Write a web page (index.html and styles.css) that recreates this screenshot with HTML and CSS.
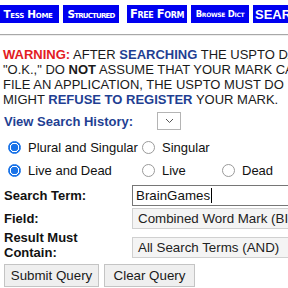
FILE: index.html
```html
<!DOCTYPE html>
<html>
<head>
<meta charset="utf-8">
<link rel="stylesheet" href="styles.css">
</head>
<body>
<div class="page">
  <div class="nav">
    <span class="navbtn home">Tess Home</span>
    <span class="navbtn structured">Structured</span>
    <span class="navbtn free">Free Form</span>
    <span class="navbtn browse">Browse Dict</span>
    <span class="navbtn search">SEARCH OG</span>
  </div>
  <div class="rule"></div>
  <p class="warn"><span class="red">WARNING:</span> AFTER <span class="blue">SEARCHING</span> THE USPTO DATABASE, EVEN IF YOU THINK THE RESULTS ARE<br>"O.K.," DO <b>NOT</b> ASSUME THAT YOUR MARK CAN BE REGISTERED AT THE USPTO. AFTER YOU<br>FILE AN APPLICATION, THE USPTO MUST DO ITS OWN SEARCH AND OTHER REVIEW, AND<br>MIGHT <span class="blue">REFUSE TO REGISTER</span> YOUR MARK.</p>
  <div class="history">
    <span class="hlabel">View Search History:</span>
    <span class="hsel"><svg width="9" height="6" viewBox="0 0 9 6"><path d="M1 1 L4.5 4.5 L8 1" fill="none" stroke="#555" stroke-width="1"/></svg></span>
  </div>
  <div class="radios">
    <label class="r"><span class="dot on"></span>Plural and Singular</label>
    <label class="r"><span class="dot"></span>Singular</label>
  </div>
  <div class="radios">
    <label class="r"><span class="dot on"></span>Live and Dead</label>
    <label class="r"><span class="dot"></span>Live</label>
    <label class="r"><span class="dot"></span>Dead</label>
  </div>
  <div class="form">
    <div class="flabel">Search Term:</div>
    <div class="field"><div class="term">BrainGames<span class="caret"></span></div></div>
    <div class="flabel">Field:</div>
    <div class="field"><div class="sel">Combined Word Mark (BI,TI,MP,TL)</div></div>
    <div class="flabel two">Result Must<br>Contain:</div>
    <div class="field low"><div class="sel">All Search Terms (AND)</div></div>
  </div>
  <div class="buttons">
    <span class="btn submit">Submit Query</span>
    <span class="btn clear">Clear Query</span>
  </div>
</div>
</body>
</html>
```
FILE: styles.css
```css
html, body {
  margin: 0;
  padding: 0;
  background: #ffffff;
  overflow: hidden;
  width: 288px;
  height: 288px;
}
.page {
  font-family: "Liberation Sans", Arial, sans-serif;
  font-size: 13px;
  color: #111;
  width: 288px;
  overflow: hidden;
}
.nav {
  display: flex;
  align-items: flex-start;
  height: 18px;
  padding-top: 5px;
  white-space: nowrap;
}
.navbtn {
  display: flex;
  align-items: center;
  justify-content: center;
  height: 18px;
  background: #0000f0;
  color: #fff;
  font-family: "DejaVu Sans", sans-serif;
  font-weight: bold;
  font-variant: small-caps;
  font-size: 10.5px;
  letter-spacing: -0.3px;
  flex: none;
  overflow: hidden;
}
.home { width: 62px; margin-left: -3px; }
.structured { width: 56px; margin-left: 4px; font-size: 10.5px; letter-spacing: -0.8px; }
.free { width: 60px; margin-left: 8px; font-size: 11.5px; letter-spacing: -0.4px; }
.browse { width: 58px; margin-left: 4px; font-size: 8.5px; letter-spacing: -0.3px; }
.search {
  width: 60px;
  margin-left: 4px;
  justify-content: flex-start;
  padding-left: 2px;
  font-variant: normal;
  font-family: "Liberation Sans", Arial, sans-serif;
  font-size: 13px;
  letter-spacing: 0;
}
.rule {
  margin-top: 11px;
  height: 1px;
  background: #a8a8a8;
  border-bottom: 1px solid #eeeeee;
}
.warn {
  margin: 11px 0 0 3px;
  white-space: nowrap;
  line-height: 15px;
  font-size: 13px;
  color: #1a1a1a;
}
.red { color: #e31b23; font-weight: bold; }
.blue { color: #1f3f93; font-weight: bold; }
.warn b { font-weight: bold; }
.history {
  display: flex;
  align-items: center;
  margin-top: 5px;
  height: 18px;
  padding-left: 4px;
}
.hlabel {
  color: #1f3f93;
  font-weight: bold;
  width: 153px;
}
.hsel {
  width: 22px;
  height: 16px;
  border: 1px solid #b4b4b4;
  background: #fff;
  display: flex;
  align-items: center;
  justify-content: center;
}
.radios {
  display: grid;
  grid-template-columns: 134px 80px auto;
  padding-left: 8px;
  height: 23px;
  align-items: center;
}
.history + .radios { margin-top: 6px; }
.r {
  display: flex;
  align-items: center;
  white-space: nowrap;
}
.dot {
  width: 11px;
  height: 11px;
  border: 1px solid #9a9a9a;
  border-radius: 50%;
  margin-right: 7px;
  box-sizing: content-box;
  background: #fff;
}
.dot.on {
  border-color: #1a73e8;
  background: radial-gradient(circle, #1a73e8 0 3.5px, #fff 4px 4.5px, #1a73e8 5px);
}
.form {
  display: grid;
  grid-template-columns: 128px 160px;
  padding-left: 4px;
  margin-top: 2px;
}
.flabel {
  font-weight: bold;
  display: flex;
  align-items: center;
}
.flabel.two { line-height: 15px; }
.field { display: flex; align-items: center; padding: 1px 0; }
.field.low { padding-top: 5px; }
.term {
  width: 170px;
  height: 21px;
  border: 1px solid #767676;
  box-sizing: border-box;
  padding-left: 3px;
  display: flex;
  align-items: center;
  font-size: 13.333px;
  white-space: nowrap;
}
.caret {
  display: inline-block;
  width: 1px;
  height: 15px;
  background: #000;
  margin-left: 1px;
}
.sel {
  width: 170px;
  height: 21px;
  border: 1px solid #d0d0d0;
  background: #f4f4f4;
  box-sizing: border-box;
  padding-left: 5px;
  display: flex;
  align-items: center;
  white-space: nowrap;
  overflow: hidden;
  font-size: 13.333px;
  color: #222;
}
.buttons {
  display: flex;
  gap: 5px;
  padding-left: 4px;
  margin-top: 4px;
}
.btn {
  height: 23px;
  border: 1px solid #c4c4c4;
  background: #efefef;
  box-sizing: border-box;
  display: flex;
  align-items: center;
  justify-content: center;
  font-size: 13.333px;
  color: #1a1a1a;
}
.submit { width: 95px; }
.clear { width: 91px; }
```
